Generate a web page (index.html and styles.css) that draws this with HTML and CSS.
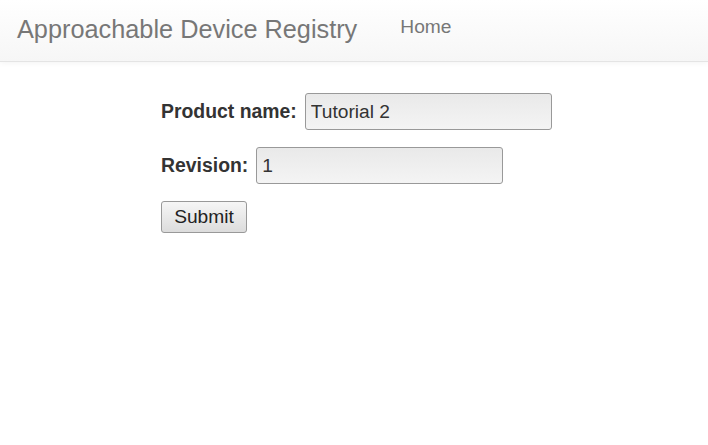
FILE: index.html
```html
<!DOCTYPE html>
<html>
<head>
<meta charset="utf-8">
<link rel="stylesheet" href="styles.css">
</head>
<body>
<nav class="navbar">
  <a class="brand" href="#">Approachable Device Registry</a>
  <a class="nav-link" href="#">Home</a>
</nav>
<form class="form">
  <div class="row">
    <label class="label" for="pn">Product name:</label>
    <input class="input" id="pn" type="text" value="Tutorial 2">
  </div>
  <div class="row">
    <label class="label" for="rev">Revision:</label>
    <input class="input" id="rev" type="text" value="1">
  </div>
  <div class="row">
    <button class="btn" type="button">Submit</button>
  </div>
</form>
</body>
</html>
```
FILE: styles.css
```css
html, body {
  margin: 0;
  padding: 0;
  background: #fff;
  font-family: "Liberation Sans", Arial, sans-serif;
  color: #333;
}
.navbar {
  display: flex;
  align-items: center;
  height: 61px;
  border-bottom: 1px solid #e4e4e4;
  background: linear-gradient(to bottom, #ffffff 0%, #f6f6f6 100%);
  box-shadow: 0 1px 6px rgba(0, 0, 0, 0.05);
}
.brand {
  font-size: 25.3px;
  color: #777;
  text-decoration: none;
  margin-left: 17px;
  margin-top: -3px;
}
.nav-link {
  font-size: 19.2px;
  color: #777;
  text-decoration: none;
  margin-left: 43px;
  margin-top: -7px;
}
.form {
  margin: 31px 0 0 161px;
  display: flex;
  flex-direction: column;
  gap: 17px;
}
.row {
  display: flex;
  align-items: center;
  gap: 8px;
}
.label {
  font-weight: bold;
  font-size: 19.4px;
  color: #333;
}
.input {
  box-sizing: border-box;
  width: 247px;
  height: 37px;
  border: 1px solid #999;
  border-radius: 3px;
  background: linear-gradient(to bottom, #e9e9e9 0%, #f4f4f4 100%);
  font-family: "Liberation Sans", Arial, sans-serif;
  font-size: 19.2px;
  color: #333;
  padding: 0 5px;
  margin: 0;
}
.btn {
  box-sizing: border-box;
  width: 86px;
  height: 32px;
  border: 1px solid #999;
  border-radius: 3px;
  background: linear-gradient(to bottom, #f6f6f6 0%, #dcdcdc 100%);
  font-family: "Liberation Sans", Arial, sans-serif;
  font-size: 19.2px;
  color: #222;
  padding: 0;
  margin: 0;
}
```
